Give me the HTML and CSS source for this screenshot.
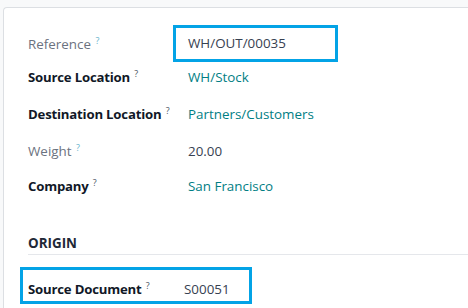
FILE: index.html
```html
<!DOCTYPE html>
<html lang="en">
<head>
    <meta charset="UTF-8" />
    <title>Delivery WH/OUT/00035</title>
    <link rel="stylesheet" href="styles.css">
</head>
<body>
    <div class="sheet">
        <div class="field field-first">
            <div class="label muted">Reference <sup class="help help-light">?</sup></div>
            <div class="value value-boxed">WH/OUT/00035</div>
        </div>
        <div class="field">
            <div class="label">Source Location <sup class="help">?</sup></div>
            <div class="value link">WH/Stock</div>
        </div>
        <div class="field field-tall">
            <div class="label">Destination Location <sup class="help">?</sup></div>
            <div class="value link">Partners/Customers</div>
        </div>
        <div class="field field-tall">
            <div class="label muted">Weight <sup class="help help-light">?</sup></div>
            <div class="value">20.00</div>
        </div>
        <div class="field field-short">
            <div class="label">Company <sup class="help">?</sup></div>
            <div class="value link">San Francisco</div>
        </div>

        <div class="group-title">ORIGIN</div>

        <div class="field field-boxed">
            <div class="label label-narrow">Source Document <sup class="help">?</sup></div>
            <div class="value">S00051</div>
        </div>
    </div>
</body>
</html>
```

FILE: styles.css
```css
html, body {
    margin: 0;
    height: 100%;
    overflow: hidden;
}
body {
    font-family: "Open Sans", "Noto Sans", sans-serif;
    font-size: 13.4px;
    background: #f8f9fa;
    color: #374151;
}
.sheet {
    margin: 7px 0 0 3px;
    width: 520px;
    height: 400px;
    padding: 17px 0 0 24px;
    background: #fff;
    border: 1px solid #dcdfe3;
    border-right: none;
    border-radius: 4px 0 0 0;
}
.field {
    display: flex;
    align-items: center;
    height: 36px;
}
.field-first {
    height: 37px;
    margin-bottom: -3px;
}
.field-tall {
    height: 37px;
}
.field-short {
    height: 34px;
}
.label {
    width: 160px;
    flex: none;
    font-size: 13.2px;
    font-weight: 700;
    letter-spacing: -0.2px;
    color: #111827;
}
.label.muted {
    font-size: 13.4px;
    font-weight: 400;
    letter-spacing: 0;
    color: #6b7280;
}
.label-narrow {
    width: 156px;
}
.help {
    font-size: 9px;
    font-weight: 400;
    letter-spacing: 0;
    color: #4b5563;
    margin-left: 1px;
}
.help-light {
    color: #65b4cc;
}
.value {
    color: #374151;
}
.link {
    color: #017e84;
}
.value-boxed {
    margin-left: -15px;
    width: 147px;
    height: 31px;
    line-height: 31px;
    padding-left: 12px;
    border: 3px solid #03a3e6;
}
.group-title {
    margin: 31px 0 0 0;
    line-height: 18px;
    padding-bottom: 2px;
    font-weight: 700;
    color: #1f2937;
    border-bottom: 1px solid #e5e7eb;
}
.field-boxed {
    margin-top: 20px;
    width: 216px;
    height: 21px;
    outline: 3px solid #03a3e6;
    outline-offset: 5px;
}
.field-boxed > div {
    margin-top: 6px;
}
```
